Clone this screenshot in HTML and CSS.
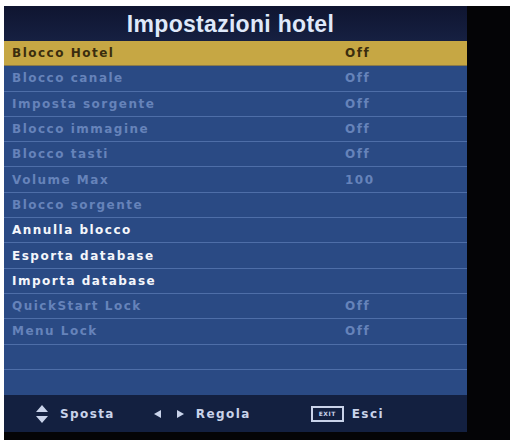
FILE: index.html
```html
<!DOCTYPE html>
<html>
<head>
<meta charset="utf-8">
<link rel="stylesheet" href="styles.css">
</head>
<body>
<div class="screen">
  <div class="panel">
    <div class="title">Impostazioni hotel</div>
    <div class="list">
      <div class="row sel"><span class="label">Blocco Hotel</span><span class="val">Off</span></div>
      <div class="row dim"><span class="label">Blocco canale</span><span class="val">Off</span></div>
      <div class="row dim"><span class="label">Imposta sorgente</span><span class="val">Off</span></div>
      <div class="row dim"><span class="label">Blocco immagine</span><span class="val">Off</span></div>
      <div class="row dim"><span class="label">Blocco tasti</span><span class="val">Off</span></div>
      <div class="row dim"><span class="label">Volume Max</span><span class="val">100</span></div>
      <div class="row dim"><span class="label">Blocco sorgente</span><span class="val"></span></div>
      <div class="row on"><span class="label">Annulla blocco</span><span class="val"></span></div>
      <div class="row on"><span class="label">Esporta database</span><span class="val"></span></div>
      <div class="row on"><span class="label">Importa database</span><span class="val"></span></div>
      <div class="row dim"><span class="label">QuickStart Lock</span><span class="val">Off</span></div>
      <div class="row dim"><span class="label">Menu Lock</span><span class="val">Off</span></div>
      <div class="row"></div>
      <div class="row last"></div>
    </div>
    <div class="footer">
      <div class="hint">
        <svg class="ud" width="14" height="20" viewBox="0 0 14 20"><path d="M7 1 L13 8 L1 8 Z M1 12 L13 12 L7 19 Z" fill="#c9d3ea"/></svg>
        <span>Sposta</span>
      </div>
      <div class="hint lr">
        <svg width="32" height="10" viewBox="0 0 32 10"><path d="M1 5 L8 1 L8 9 Z M24 1 L31 5 L24 9 Z" fill="#c9d3ea"/></svg>
        <span>Regola</span>
      </div>
      <div class="hint exit">
        <span class="box">EXIT</span>
        <span>Esci</span>
      </div>
    </div>
  </div>
</div>
</body>
</html>
```
FILE: styles.css
```css
html, body {
  margin: 0;
  padding: 0;
  background: #ffffff;
}
body {
  font-family: "DejaVu Sans", "Liberation Sans", sans-serif;
  width: 510px;
  height: 440px;
  overflow: hidden;
}
.screen {
  margin: 6px 0 0 4px;
  width: 506px;
  height: 434px;
  background: #040406;
}
.panel {
  width: 463px;
  display: flex;
  flex-direction: column;
}
.title {
  height: 35px;
  background: linear-gradient(#0f1530, #162042);
  color: #dfe9fa;
  font-family: "Liberation Sans", Arial, sans-serif;
  font-weight: bold;
  font-size: 23px;
  text-align: center;
  line-height: 37px;
  letter-spacing: 0.3px;
  padding-right: 10px;
}
.list {
  background: #2a4a84;
  display: flex;
  flex-direction: column;
}
.row {
  height: 24.3px;
  border-bottom: 1px solid #4e6ea8;
  display: flex;
  align-items: center;
  font-size: 12px;
  font-weight: bold;
  letter-spacing: 1.5px;
  padding-left: 8px;
}
.row.last {
  border-bottom: none;
  height: 25.3px;
}
.label {
  width: 333px;
}
.val {
  flex: 1;
}
.sel {
  background: #c6a744;
  color: #3b2d0e;
  border-bottom-color: #8a7a4a;
}
.dim {
  color: #6683ba;
}
.on {
  color: #f4f6fb;
}
.footer {
  height: 37px;
  background: #132040;
  display: flex;
  align-items: center;
  color: #c9d3ea;
  font-weight: bold;
  font-size: 12px;
  letter-spacing: 1.4px;
}
.hint {
  display: flex;
  align-items: center;
}
.hint:first-child {
  margin-left: 31px;
  gap: 11px;
}
.hint.lr {
  margin-left: 38px;
  gap: 11px;
}
.hint.exit {
  margin-left: 60px;
  gap: 8px;
}
.box {
  display: inline-block;
  border: 2px solid #c9d3ea;
  font-size: 6px;
  letter-spacing: 0.5px;
  padding: 2px 6px;
  line-height: 8px;
}
```
